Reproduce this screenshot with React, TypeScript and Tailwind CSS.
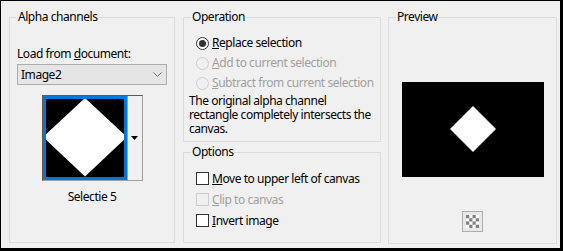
import React from 'react';

const font = { fontFamily: '"Noto Sans", "Open Sans", sans-serif' };

const Radio = ({ checked, disabled }: { checked?: boolean; disabled?: boolean }) => (
  <span
    className={`flex shrink-0 items-center justify-center w-[13px] h-[13px] rounded-full border ${
      disabled ? 'border-[#cccccc] bg-[#f0f0f0]' : 'border-[#333333] bg-white'
    }`}
  >
    {checked && <span className="block w-[7px] h-[7px] rounded-full bg-[#333333]" />}
  </span>
);

const Check = ({ disabled }: { disabled?: boolean }) => (
  <span
    className={`block shrink-0 w-[13px] h-[13px] border ${
      disabled ? 'border-[#cccccc] bg-[#f0f0f0]' : 'border-[#333333] bg-white'
    }`}
  />
);

const Row = ({ children, disabled, h }: { children: React.ReactNode; disabled?: boolean; h: string }) => (
  <div className={`flex items-center gap-[3px] ${h} ${disabled ? 'text-[#a0a0a0]' : 'text-black'}`}>{children}</div>
);

const Group = ({ title, className, children }: { title: string; className: string; children: React.ReactNode }) => (
  <fieldset className={`border border-[#dcdcdc] ${className}`}>
    <legend className="ml-[7px] px-[1px] leading-[16px] text-black">{title}</legend>
    {children}
  </fieldset>
);

export default function App() {
  return (
    <div
      className="w-[563px] h-[251px] bg-[#f0f0f0] border-t border-l border-r-[3px] border-b-[3px] border-black text-[12px] leading-[16px] tracking-[-0.45px] whitespace-nowrap text-black"
      style={font}
    >
      <div className="flex pt-[8px] pl-[8px] gap-[8px]">
        {/* Alpha channels */}
        <Group title="Alpha channels" className="w-[166px] h-[234px]">
          <div className="pl-[7px] pt-[21px]">
            <div>
              Load from <u>d</u>ocument:
            </div>
            <div className="mt-[2px] flex items-center justify-between w-[150px] h-[21px] bg-[#e5e5e5] border border-[#adadad] pl-[3px] pr-[4px]">
              <span>Image2</span>
              <svg width="9" height="5" viewBox="0 0 9 5">
                <path d="M0.5 0.5 L4.5 4.5 L8.5 0.5" fill="none" stroke="#707070" strokeWidth="1" />
              </svg>
            </div>
          </div>
          <div className="mt-[10px] mx-auto flex w-[101px] h-[86px] border-t border-l border-[#5a5a5a] border-r border-b border-r-[#a0a0a0] border-b-[#a0a0a0]">
            <div className="w-[84px] h-[84px] border-[3px] border-[#0078d7] bg-black">
              <svg width="78" height="78" viewBox="0 0 78 78" className="block">
                <rect width="78" height="78" fill="#000" />
                <polygon points="39,-1 81,38 39,77.5 -3,38" fill="#fff" />
              </svg>
            </div>
            <div className="flex-1 flex items-center justify-center bg-[#f0f0f0] border-l border-[#a0a0a0]">
              <svg width="7" height="4" viewBox="0 0 7 4">
                <path d="M0 0 H7 L3.5 4 Z" fill="#000" />
              </svg>
            </div>
          </div>
          <div className="mt-[8px] text-center">Selectie 5</div>
        </Group>

        {/* Operation + Options */}
        <div className="flex flex-col w-[198px]">
          <Group title="Operation" className="h-[133px]">
            <div className="pl-[12px] pt-[8px]">
              <Row h="h-[20px]">
                <Radio checked />
                <span>
                  <u>R</u>eplace selection
                </span>
              </Row>
              <Row h="h-[20px]" disabled>
                <Radio disabled />
                <span>
                  <u>A</u>dd to current selection
                </span>
              </Row>
              <Row h="h-[20px]" disabled>
                <Radio disabled />
                <span>
                  <u>S</u>ubtract from current selection
                </span>
              </Row>
            </div>
            <p className="pl-[5px] mt-[1px] leading-[14px]">
              The original alpha channel
              <br />
              rectangle completely intersects the
              <br />
              canvas.
            </p>
          </Group>
          <Group title="Options" className="mt-[2px] h-[99px]">
            <div className="pl-[12px] pt-[8px]">
              <Row h="h-[21px]">
                <Check />
                <span>
                  <u>M</u>ove to upper left of canvas
                </span>
              </Row>
              <Row h="h-[21px]" disabled>
                <Check disabled />
                <span>
                  <u>C</u>lip to canvas
                </span>
              </Row>
              <Row h="h-[21px]">
                <Check />
                <span>
                  <u>I</u>nvert image
                </span>
              </Row>
            </div>
          </Group>
        </div>

        {/* Preview */}
        <Group title="Preview" className="ml-[-1px] w-[169px] h-[235px]">
          <div className="mt-[57px] mx-auto w-[142px] h-[95px] bg-black">
            <svg width="142" height="95" viewBox="0 0 142 95" className="block">
              <polygon points="71,24 94,47 71,70 48,47" fill="#fff" />
            </svg>
          </div>
          <div className="mt-[34px] mx-auto w-[21px] h-[21px] border border-[#adadad] bg-[#e8e8e8] flex items-center justify-center">
            <svg width="13" height="13" viewBox="0 0 13 13">
              <rect width="13" height="13" fill="#fff" />
              <rect x="0" y="0" width="3.25" height="3.25" fill="#808080" />
              <rect x="6.5" y="0" width="3.25" height="3.25" fill="#808080" />
              <rect x="3.25" y="3.25" width="3.25" height="3.25" fill="#808080" />
              <rect x="9.75" y="3.25" width="3.25" height="3.25" fill="#808080" />
              <rect x="0" y="6.5" width="3.25" height="3.25" fill="#808080" />
              <rect x="6.5" y="6.5" width="3.25" height="3.25" fill="#808080" />
              <rect x="3.25" y="9.75" width="3.25" height="3.25" fill="#808080" />
              <rect x="9.75" y="9.75" width="3.25" height="3.25" fill="#808080" />
            </svg>
          </div>
        </Group>
      </div>
    </div>
  );
}
